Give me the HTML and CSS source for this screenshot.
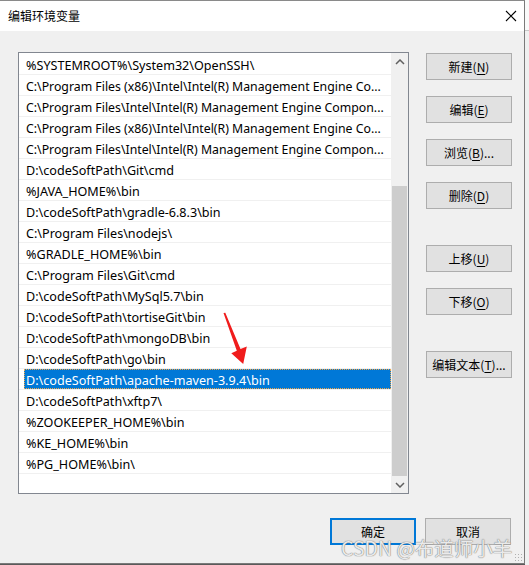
FILE: index.html
```html
<!DOCTYPE html>
<html lang="zh">
<head>
<meta charset="utf-8">
<title>编辑环境变量</title>
<link rel="stylesheet" href="styles.css">
</head>
<body>
<div class="screen">
  <div class="window">
    <div class="titlebar">
      <span class="title">编辑环境变量</span>
      <svg class="close" width="12" height="12" viewBox="0 0 12 12"><path d="M1 1 L11 11 M11 1 L1 11" stroke="#000" stroke-width="1.1" fill="none"/></svg>
    </div>
    <div class="body">
      <div class="content">
        <div class="listbox">
          <div class="rows">
            <div class="row">%SYSTEMROOT%\System32\OpenSSH\</div>
            <div class="row trunc">C:\Program Files (x86)\Intel\Intel(R) Management Engine Co...</div>
            <div class="row trunc">C:\Program Files\Intel\Intel(R) Management Engine Compon...</div>
            <div class="row trunc">C:\Program Files (x86)\Intel\Intel(R) Management Engine Co...</div>
            <div class="row trunc">C:\Program Files\Intel\Intel(R) Management Engine Compon...</div>
            <div class="row">D:\codeSoftPath\Git\cmd</div>
            <div class="row">%JAVA_HOME%\bin</div>
            <div class="row">D:\codeSoftPath\gradle-6.8.3\bin</div>
            <div class="row">C:\Program Files\nodejs\</div>
            <div class="row">%GRADLE_HOME%\bin</div>
            <div class="row">C:\Program Files\Git\cmd</div>
            <div class="row">D:\codeSoftPath\MySql5.7\bin</div>
            <div class="row">D:\codeSoftPath\tortiseGit\bin</div>
            <div class="row">D:\codeSoftPath\mongoDB\bin</div>
            <div class="row">D:\codeSoftPath\go\bin</div>
            <div class="row selected"><span class="sel">D:\codeSoftPath\apache-maven-3.9.4\bin</span></div>
            <div class="row">D:\codeSoftPath\xftp7\</div>
            <div class="row">%ZOOKEEPER_HOME%\bin</div>
            <div class="row">%KE_HOME%\bin</div>
            <div class="row">%PG_HOME%\bin\</div>
          </div>
          <div class="scrollbar">
            <div class="arrow">
              <svg width="10" height="6" viewBox="0 0 10 6"><path d="M1 5 L5 1 L9 5" stroke="#606060" stroke-width="1.5" fill="none"/></svg>
            </div>
            <div class="track"><div class="thumb"></div></div>
            <div class="arrow">
              <svg width="10" height="6" viewBox="0 0 10 6"><path d="M1 1 L5 5 L9 1" stroke="#606060" stroke-width="1.5" fill="none"/></svg>
            </div>
          </div>
        </div>
        <div class="side">
          <button class="btn">新建(<u>N</u>)</button>
          <button class="btn">编辑(<u>E</u>)</button>
          <button class="btn">浏览(<u>B</u>)...</button>
          <button class="btn">删除(<u>D</u>)</button>
          <button class="btn far">上移(<u>U</u>)</button>
          <button class="btn">下移(<u>O</u>)</button>
          <button class="btn far">编辑文本(<u>T</u>)...</button>
        </div>
      </div>
      <div class="footer">
        <button class="btn default">确定</button>
        <button class="btn">取消</button>
      </div>
      <div class="grip"></div>
    </div>
    <svg class="redarrow" width="30" height="60" viewBox="220 308 30 60"><polygon points="223.5,313 225.3,312.8 240.5,349 246.8,346.5 243.2,364 231.3,353.3 236.8,350.8" fill="#f01c1c"/></svg>
    <div class="watermark">CSDN @布道师小羊</div>
  </div>
  <div class="behind">
    <div class="b1"></div>
    <div class="b2"></div>
  </div>
</div>
</body>
</html>
```

FILE: styles.css
```css
* { box-sizing: border-box; }
html, body { margin: 0; padding: 0; }
body {
  width: 529px;
  height: 565px;
  overflow: hidden;
  background: #f0f0f0;
  font-family: "Noto Sans", "Noto Sans CJK SC", sans-serif;
  font-size: 12px;
  color: #000;
}
.screen {
  display: flex;
  width: 529px;
  height: 565px;
  background: #5a5a5a;
}
.window {
  position: relative;
  width: 525px;
  height: 564px;
  border-top: 1px solid #8a8a8a;
  border-right: 1px solid #7a7a7a;
  border-bottom: 1px solid #7a7a7a;
  background: #f0f0f0;
  display: flex;
  flex-direction: column;
}
.titlebar {
  height: 30px;
  background: #fff;
  display: flex;
  align-items: center;
  justify-content: space-between;
  padding: 0 8px 0 8px;
  flex: none;
}
.title {
  font-family: "Noto Sans CJK SC", sans-serif;
  font-size: 12px;
  color: #000;
  margin-top: -1px;
}
.close { margin-right: -1px; }
.body {
  flex: 1;
  position: relative;
  padding: 21px 0 0 18px;
}
.content {
  display: flex;
  gap: 17px;
}
.listbox {
  width: 391px;
  height: 442px;
  border: 1px solid #828790;
  background: #fff;
  display: flex;
}
.rows {
  flex: 1;
  overflow: hidden;
  padding-top: 1px;
}
.row {
  height: 21px;
  border-bottom: 1px solid #f0f0f0;
  padding-left: 7px;
  line-height: 24px;
  font-size: 12.6px;
  white-space: nowrap;
  overflow: hidden;
}
.row.trunc { font-size: 12.3px; }
.row.selected { padding-left: 5px; }
.sel {
  display: block;
  height: 20px;
  padding-left: 2px;
  background: #0078d7;
  color: #fff;
  outline: 1px dotted #f0a64a;
  outline-offset: -1px;
}
.scrollbar {
  width: 17px;
  background: #f0f0f0;
  display: flex;
  flex-direction: column;
}
.arrow {
  height: 17px;
  display: flex;
  align-items: center;
  justify-content: center;
  flex: none;
}
.track {
  flex: 1;
  display: flex;
  flex-direction: column;
  justify-content: flex-end;
  padding: 0 1px;
}
.thumb {
  height: 290px;
  background: #cdcdcd;
}
.side {
  display: flex;
  flex-direction: column;
  padding-top: 1px;
  gap: 16px;
}
.btn {
  width: 86px;
  height: 27px;
  border: 1px solid #adadad;
  background: #e1e1e1;
  font-family: "Noto Sans CJK SC", sans-serif;
  font-size: 12px;
  color: #000;
  padding: 0;
  margin: 0;
  line-height: 25px;
}
.btn u { text-underline-offset: 2px; }
.btn.far { margin-top: 20px; }
.footer {
  display: flex;
  gap: 9px;
  padding-left: 312px;
  margin-top: 24px;
}
.btn.default {
  border: 2px solid #0078d7;
  line-height: 23px;
}
.grip {
  position: absolute;
  right: 2px;
  bottom: 2px;
  width: 8px;
  height: 8px;
  background-image: radial-gradient(circle, #b0b0b0 0.8px, transparent 1px);
  background-size: 3px 3px;
}
.redarrow {
  position: absolute;
  left: 220px;
  top: 307px;
}
.watermark {
  position: absolute;
  left: 341px;
  top: 535px;
  font-family: "Noto Sans CJK SC", sans-serif;
  font-size: 19.5px;
  color: rgba(255, 255, 255, 0.85);
  text-shadow: 0 0 1px #7a7a7a, 0 0 1px #7a7a7a;
  white-space: nowrap;
  line-height: 24px;
}
.behind {
  flex: 1;
  background: #f3f3f3;
  display: flex;
  flex-direction: column;
}
.b1 { height: 31px; background: #fafafa; border-bottom: 1px solid #c8c8c8; }
.b2 { flex: 1; background: #f0f0f0; }
```
